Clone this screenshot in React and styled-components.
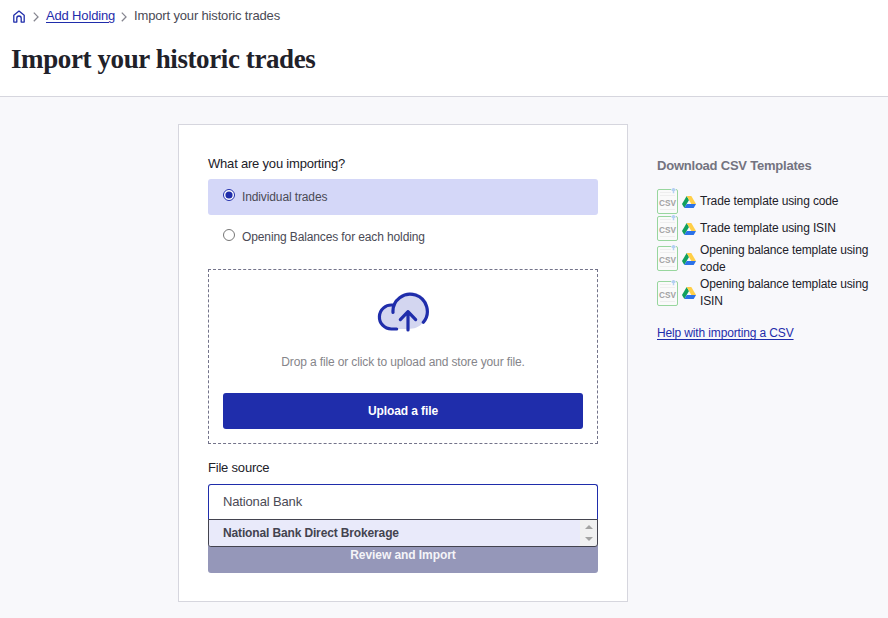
import React, { useState } from 'react';
import styled, { createGlobalStyle } from 'styled-components';

const templates = [
  { id: 1, lines: ['Trade template using code'] },
  { id: 2, lines: ['Trade template using ISIN'] },
  { id: 3, lines: ['Opening balance template using', 'code'] },
  { id: 4, lines: ['Opening balance template using', 'ISIN'] },
];

const options = [
  { value: 'trades', label: 'Individual trades' },
  { value: 'balances', label: 'Opening Balances for each holding' },
];

function HomeIcon() {
  return (
    <svg width="12" height="13" viewBox="0 0 12 13" fill="none" stroke="#1f2dab" strokeWidth="1.3" strokeLinejoin="round">
      <path d="M0.8 5.2 6 1.1l5.2 4.1v6.9H8.2V8.2a2.2 2.2 0 0 0-4.4 0v3.9h-3z" />
    </svg>
  );
}

function Chevron() {
  return (
    <svg width="6" height="10" viewBox="0 0 6 10" fill="none" stroke="#85858f" strokeWidth="1.3">
      <path d="M0.8 0.6 5 4.9 0.8 9.2" />
    </svg>
  );
}

function CloudIcon() {
  return (
    <svg width="54" height="40" viewBox="48 36 162 120" fill="none">
      <path d="M94 147a36 36 0 0 1 0-72h10A52 52 0 1 1 190 127C178 142 162 147 144 147z" fill="#d3d6f0" />
      <g stroke="#1f2dab" strokeWidth="9.6" strokeLinecap="round" strokeLinejoin="round">
        <path d="M110 147H94a36 36 0 1 1 4-71.8" />
        <path d="M99 97a51.5 51.5 0 1 1 91 30" />
        <path d="M144 150V95M121 119l23-24 23 24" />
      </g>
    </svg>
  );
}

function CsvIcon() {
  return (
    <svg width="21" height="26" viewBox="0 0 21 26">
      <rect x="0.5" y="1.5" width="20" height="24" rx="1.5" fill="#fafafa" stroke="#98d69e" />
      <path d="M3 4.5h11M3 7.5h15M3 21.5h15" stroke="#eeeeee" />
      <path d="M14 0h5v3h-5z" fill="#f8f8fb" />
      <path d="M16.5 0.3v5M14.6 2.4l1.9-1.9 1.9 1.9" stroke="#b4d0f2" strokeWidth="1.5" fill="none" />
      <text x="10.5" y="18" textAnchor="middle" fontFamily="'Liberation Sans', Arial, sans-serif" fontSize="9" fontWeight="700" fill="#a3a3a3" textLength="17" lengthAdjust="spacingAndGlyphs">CSV</text>
    </svg>
  );
}

function DriveIcon() {
  return (
    <svg width="14" height="12" viewBox="0 0 14 12">
      <path d="M4.7 0 0 8.1l2.3 3.9L7 3.9z" fill="#11a05e" />
      <path d="M4.7 0h4.6L14 8.1H9.3z" fill="#ffcf48" />
      <path d="M4.7 8.1H14L11.7 12H2.3z" fill="#2b72e8" />
    </svg>
  );
}

export default function App() {
  const [selected, setSelected] = useState('trades');
  const [source, setSource] = useState('National Bank');

  return (
    <>
      <GlobalStyle />
      <Header>
        <Breadcrumbs>
          <HomeIcon />
          <Chevron />
          <a href="#holding">Add Holding</a>
          <Chevron />
          <span>Import your historic trades</span>
        </Breadcrumbs>
        <Title>Import your historic trades</Title>
      </Header>
      <Content>
        <Card>
          <Label>What are you importing?</Label>
          {options.map(({ value, label }) => (
            <Option key={value} $active={selected === value}>
              <Radio
                type="radio"
                name="importType"
                checked={selected === value}
                onChange={() => setSelected(value)}
              />
              <span>{label}</span>
            </Option>
          ))}
          <DropZone>
            <CloudIcon />
            <p>Drop a file or click to upload and store your file.</p>
            <UploadButton type="button">Upload a file</UploadButton>
          </DropZone>
          <Label>File source</Label>
          <SourceField>
            <SourceInput value={source} onChange={(e) => setSource(e.target.value)} />
            <Suggestions>
              <Suggestion>National Bank Direct Brokerage</Suggestion>
              <ScrollBar>
                <Arrow $up />
                <Arrow />
              </ScrollBar>
            </Suggestions>
          </SourceField>
          <ImportButton type="button">Review and Import</ImportButton>
        </Card>
        <Sidebar>
          <h2>Download CSV Templates</h2>
          {templates.map(({ id, lines }) => (
            <TemplateRow key={id}>
              <CsvIcon />
              <DriveIcon />
              <div className="name">
                {lines.map((line) => (
                  <div key={line}>{line}</div>
                ))}
              </div>
            </TemplateRow>
          ))}
          <HelpLink href="#help">Help with importing a CSV</HelpLink>
        </Sidebar>
      </Content>
    </>
  );
}

const GlobalStyle = createGlobalStyle`
  * {
    box-sizing: border-box;
  }
  body {
    margin: 0;
    overflow: hidden;
    background: #f8f8fb;
    color: #212129;
    font-family: 'Liberation Sans', Arial, sans-serif;
    font-size: 13px;
    line-height: 17px;
  }
  a {
    color: #1f2dab;
    text-underline-offset: 2px;
  }
`;

const Header = styled.header`
  height: 97px;
  padding: 7px 12px 0;
  background: #fff;
  border-bottom: 1px solid #d6d6de;
`;

const Breadcrumbs = styled.nav`
  display: flex;
  align-items: center;
  height: 18px;
  color: #4a4a55;
  padding-left: 1px;
  letter-spacing: -0.16px;
  white-space: nowrap;
  svg {
    flex: none;
    margin: 1px 7px 0 0;
  }
  svg:first-child {
    margin-right: 8px;
  }
  a {
    margin-right: 6px;
  }
  a,
  span {
    padding-bottom: 1px;
  }
`;

const Title = styled.h1`
  margin: 17px 0 0 -1px;
  font-family: 'Liberation Serif', 'Times New Roman', serif;
  font-size: 27px;
  font-weight: 700;
  line-height: 34px;
  letter-spacing: -0.4px;
  white-space: nowrap;
`;

const Content = styled.main`
  display: flex;
  align-items: flex-start;
  gap: 29px;
  padding: 27px 0 0 178px;
`;

const Card = styled.section`
  width: 450px;
  height: 478px;
  padding: 30px 29px 0;
  background: #fff;
  border: 1px solid #d6d6de;
`;

const Label = styled.div`
  height: 24px;
  letter-spacing: -0.2px;
`;

const Option = styled.label`
  display: flex;
  align-items: center;
  height: 36px;
  margin-bottom: 4px;
  padding-left: 15px;
  border-radius: 3px;
  background: ${({ $active }) => ($active ? '#d4d7f8' : 'transparent')};
  color: #4a4a55;
  font-size: 12px;
  letter-spacing: -0.12px;
`;

const Radio = styled.input`
  width: 12px;
  height: 12px;
  margin: 0 7px 4px 0;
  accent-color: #1f2dab;
`;

const DropZone = styled.div`
  display: flex;
  flex-direction: column;
  align-items: center;
  height: 175px;
  margin: 14px 0 15px;
  padding: 22px 14px 0;
  border: 1px dashed #73738a;
  p {
    margin: 22px 0;
    color: #85858a;
    font-size: 12px;
    letter-spacing: -0.13px;
  }
`;

const UploadButton = styled.button`
  width: 100%;
  height: 36px;
  border: none;
  border-radius: 3px;
  background: #1f2dab;
  color: #fff;
  font: 700 12px 'Liberation Sans', Arial, sans-serif;
  letter-spacing: -0.1px;
`;

const SourceField = styled.div`
  position: relative;
  height: 53px;
  margin-top: 1px;
`;

const SourceInput = styled.input`
  display: block;
  width: 100%;
  height: 36px;
  padding: 0 14px 3px;
  border: 1px solid #1f2dab;
  border-bottom: none;
  border-radius: 3px 3px 0 0;
  outline: none;
  background: #fff;
  color: #4a4a55;
  font: 13px 'Liberation Sans', Arial, sans-serif;
  letter-spacing: -0.15px;
`;

const Suggestions = styled.div`
  position: absolute;
  top: 35px;
  left: 0;
  right: 0;
  z-index: 1;
  display: flex;
  height: 28px;
  border: 1px solid #43434f;
  border-radius: 0 0 3px 3px;
  background: #f1f1f1;
  overflow: hidden;
`;

const Suggestion = styled.div`
  flex: 1;
  padding-left: 14px;
  border-radius: 0 0 3px 0;
  background: #e9eafa;
  color: #43434f;
  font-size: 12px;
  font-weight: 700;
  line-height: 26px;
  letter-spacing: -0.14px;
`;

const ScrollBar = styled.div`
  display: flex;
  flex-direction: column;
  align-items: center;
  gap: 8px;
  width: 17px;
  padding-top: 5px;
`;

const Arrow = styled.span`
  border: 4px solid transparent;
  border-width: ${({ $up }) => ($up ? '0 4px 4px' : '4px 4px 0')};
  border-${({ $up }) => ($up ? 'bottom' : 'top')}-color: #a3a3a3;
`;

const ImportButton = styled.button`
  display: block;
  width: 100%;
  height: 36px;
  padding-bottom: 2px;
  border: none;
  border-radius: 3px;
  background: #9597b9;
  color: #f4f4f8;
  font: 700 12px 'Liberation Sans', Arial, sans-serif;
  letter-spacing: -0.07px;
`;

const Sidebar = styled.aside`
  width: 231px;
  padding-top: 33px;
  h2 {
    margin: 0 0 14px;
    color: #737380;
    font-size: 13px;
    line-height: 17px;
    letter-spacing: -0.22px;
    white-space: nowrap;
  }
`;

const TemplateRow = styled.div`
  display: flex;
  align-items: center;
  min-height: 27px;
  svg {
    margin: -1px 0 1px;
  }
  &:last-of-type svg:first-child {
    margin: 0;
  }
  svg:nth-of-type(2) {
    margin: 0 4px 0;
  }
  .name {
    font-size: 12px;
    letter-spacing: -0.13px;
    white-space: nowrap;
  }
`;

const HelpLink = styled.a`
  display: inline-block;
  margin-top: 15px;
  font-size: 12px;
  letter-spacing: -0.14px;
`;
